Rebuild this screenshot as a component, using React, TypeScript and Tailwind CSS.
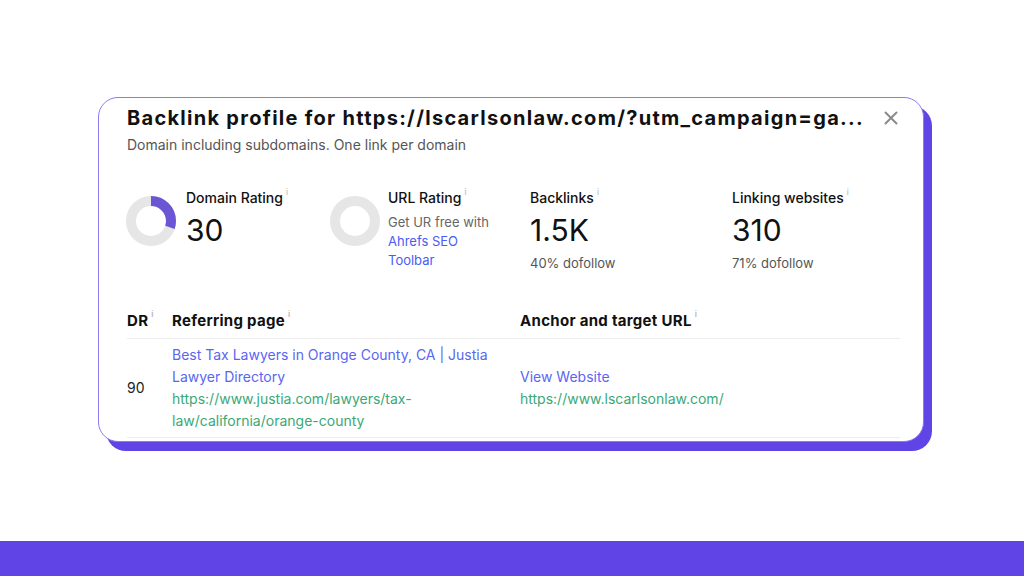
import React from "react";

function Donut({ value }: { value: number }) {
  const r = 20;
  const c = 2 * Math.PI * r;
  return (
    <svg width="52" height="52" viewBox="0 0 52 52" className="shrink-0">
      <circle cx="26" cy="26" r={r} fill="none" stroke="#e6e6e6" strokeWidth="10" />
      {value > 0 && (
        <circle
          cx="26"
          cy="26"
          r={r}
          fill="none"
          stroke="#6c55d4"
          strokeWidth="10"
          strokeDasharray={`${(c * value) / 100} ${c}`}
          transform="rotate(-90 26 26)"
        />
      )}
    </svg>
  );
}

function Info() {
  return <span className="ml-[3px] align-top text-[8px] leading-none text-[#bbb]">i</span>;
}

export default function App() {
  return (
    <div className="w-[1024px] h-[576px] bg-white flex flex-col overflow-hidden" style={{ fontFamily: "Inter, 'Noto Sans', sans-serif" }}>
      <div className="flex-1 flex items-start pt-[97px] pl-[98px]">
        <div className="relative w-[826px]">
          <div className="absolute left-[8px] top-[9px] w-full h-full rounded-[20px] bg-[#6144e6]" />
          <div className="relative h-[345px] bg-white rounded-[20px] border border-[#8a7bf0] pl-[28px] pr-[22px] pt-[5px]">
            <div className="flex items-center justify-between">
              <h1 className="whitespace-nowrap text-[20px] font-bold text-[#111] tracking-[1.28px]">
                Backlink profile for https://lscarlsonlaw.com/?utm_campaign=ga...
              </h1>
              <svg width="14" height="14" viewBox="0 0 14 14" className="mr-[3px]">
                <path d="M1.5 1.5 L12.5 12.5 M12.5 1.5 L1.5 12.5" stroke="#8a8a8a" strokeWidth="2" strokeLinecap="round" />
              </svg>
            </div>
            <p className="mt-[1px] text-[14px] text-[#555]">Domain including subdomains. One link per domain</p>

            <div className="mt-[33px] flex text-[#111]">
              <div className="w-[202px] flex gap-[9px]">
                <div className="pt-[7px] -ml-[2px]">
                  <Donut value={30} />
                </div>
                <div>
                  <div className="text-[14px] font-medium leading-[20px]">
                    Domain Rating<Info />
                  </div>
                  <div className="mt-[3px] text-[30px] leading-[38px]">30</div>
                </div>
              </div>
              <div className="w-[201px] flex gap-[7px]">
                <div className="pt-[7px]">
                  <Donut value={0} />
                </div>
                <div>
                  <div className="text-[14px] font-medium leading-[20px]">
                    URL Rating<Info />
                  </div>
                  <div className="mt-[5px] text-[13px] leading-[19px] text-[#666]">Get UR free with</div>
                  <div className="text-[13px] leading-[19px] text-[#4b5bf5]">
                    Ahrefs SEO
                    <br />
                    Toolbar
                  </div>
                </div>
              </div>
              <div className="w-[202px]">
                <div className="text-[14px] font-medium leading-[20px]">
                  Backlinks<Info />
                </div>
                <div className="mt-[3px] text-[30px] leading-[38px]">1.5K</div>
                <div className="mt-[5px] text-[13px] text-[#555]">40% dofollow</div>
              </div>
              <div>
                <div className="text-[14px] font-medium leading-[20px]">
                  Linking websites<Info />
                </div>
                <div className="mt-[3px] text-[30px] leading-[38px]">310</div>
                <div className="mt-[5px] text-[13px] text-[#555]">71% dofollow</div>
              </div>
            </div>

            <div className="mt-[36px] w-[773px]">
              <div className="flex h-[29px] items-start border-b border-[#ececec] text-[15px] font-bold tracking-[0.3px] text-[#111]">
                <div className="w-[45px]">
                  DR<Info />
                </div>
                <div className="w-[348px]">
                  Referring page<Info />
                </div>
                <div>
                  Anchor and target URL<Info />
                </div>
              </div>
              <div className="flex items-center border-b border-[#ececec] py-[5px] text-[14px] leading-[22px]">
                <div className="w-[45px] text-[#222]">90</div>
                <div className="w-[348px]">
                  <div className="text-[#5a66f2]">Best Tax Lawyers in Orange County, CA | Justia Lawyer Directory</div>
                  <div className="text-[#3aa877]">https://www.justia.com/lawyers/tax-law/california/orange-county</div>
                </div>
                <div>
                  <div className="text-[#5a66f2]">View Website</div>
                  <div className="text-[#3aa877]">https://www.lscarlsonlaw.com/</div>
                </div>
              </div>
            </div>
          </div>
        </div>
      </div>
      <div className="h-[35px] bg-[#6144e6]" />
    </div>
  );
}
